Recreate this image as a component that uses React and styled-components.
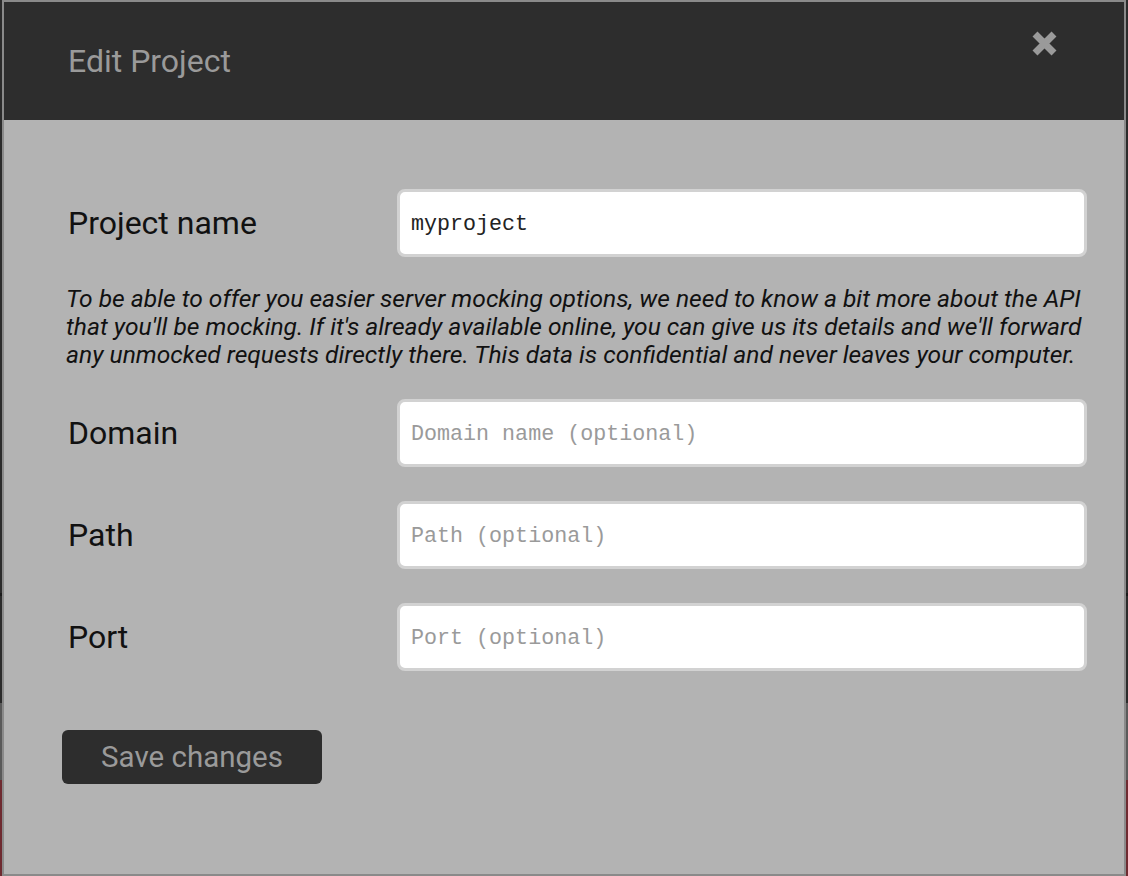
import styled, { createGlobalStyle } from 'styled-components'

const GlobalStyle = createGlobalStyle`
  html, body {
    margin: 0;
    padding: 0;
    height: 100%;
    overflow: hidden;
  }
  body {
    font-family: Roboto, "Liberation Sans", sans-serif;
    background: #2b2b2b;
  }
  * {
    box-sizing: border-box;
  }
`

const Page = styled.div`
  height: 876px;
  display: flex;
  flex-direction: column;
`
const Band = styled.div`
  height: ${(props) => props.h};
  flex: ${(props) => (props.grow ? 1 : 'none')};
  background: ${(props) => props.bg};
`

const Modal = styled.div`
  position: fixed;
  top: 0;
  left: 2px;
  width: 1124px;
  height: 876px;
  border: 2px solid #8a8a8a;
  background: #b3b3b3;
  display: flex;
  flex-direction: column;
`
const Header = styled.header`
  height: 118px;
  background: #2d2d2d;
  display: flex;
  justify-content: space-between;
  align-items: flex-start;
  padding: 0 66px 0 64px;
`
const Title = styled.h2`
  margin: 0;
  align-self: center;
  font-weight: 400;
  font-size: 32px;
  color: #9a9a9a;
`
const CloseButton = styled.button`
  margin-top: 28px;
  width: 27px;
  height: 27px;
  padding: 0;
  border: none;
  background: none;
  display: flex;
  cursor: pointer;
`
const Body = styled.div`
  padding: 69px 37px 0 64px;
  display: flex;
  flex-direction: column;
`
const Row = styled.div`
  display: grid;
  grid-template-columns: 329px 1fr;
  align-items: center;
  margin-bottom: ${(props) => props.gap || '34px'};
`
const Label = styled.label`
  font-size: 32px;
  color: #111;
`
const Input = styled.input`
  height: 68px;
  width: 100%;
  border: 3px solid #d2d2d2;
  border-radius: 8px;
  background: #fff;
  padding: 3px 11px 0;
  font-family: "Liberation Mono", "Courier New", monospace;
  font-size: 21.7px;
  color: #222;
  outline: none;

  &::placeholder {
    color: #9a9a9a;
  }
`
const Note = styled.p`
  margin: 28px 0 30px -2px;
  font-style: italic;
  font-size: 24.6px;
  line-height: 28px;
  color: #111;
  white-space: nowrap;
`
const SaveButton = styled.button`
  margin-top: 59px;
  margin-left: -6px;
  width: 260px;
  height: 54px;
  border: none;
  border-radius: 6px;
  background: #2d2d2d;
  color: #9a9a9a;
  font-family: Roboto, "Liberation Sans", sans-serif;
  font-size: 29.5px;
  cursor: pointer;
`

function CloseIcon() {
  return (
    <svg width="27" height="27" viewBox="0 0 27 27">
      <path d="M4 4 L23 23 M23 4 L4 23" stroke="#9a9a9a" strokeWidth="7" strokeLinecap="butt" />
    </svg>
  )
}

function Field({ label, placeholder, value, gap }) {
  return (
    <Row gap={gap}>
      <Label>{label}</Label>
      <Input placeholder={placeholder} defaultValue={value} />
    </Row>
  )
}

export default function App() {
  return (
    <>
      <GlobalStyle />
      <Page>
        <Band h="593px" bg="#2b2b2b" />
        <Band h="3px" bg="#1a1a1a" />
        <Band h="107px" bg="#2b2b2b" />
        <Band h="77px" bg="#5a5a5a" />
        <Band grow bg="#6e2a30" />
      </Page>
      <Modal>
        <Header>
          <Title>Edit Project</Title>
          <CloseButton aria-label="Close">
            <CloseIcon />
          </CloseButton>
        </Header>
        <Body>
          <Field label="Project name" value="myproject" gap="0" />
          <Note>
            To be able to offer you easier server mocking options, we need to know a bit more about the API
            <br />
            that you'll be mocking. If it's already available online, you can give us its details and we'll forward
            <br />
            any unmocked requests directly there. This data is confidential and never leaves your computer.
          </Note>
          <Field label="Domain" placeholder="Domain name (optional)" />
          <Field label="Path" placeholder="Path (optional)" />
          <Field label="Port" placeholder="Port (optional)" gap="0" />
          <div>
            <SaveButton>Save changes</SaveButton>
          </div>
        </Body>
      </Modal>
    </>
  )
}
